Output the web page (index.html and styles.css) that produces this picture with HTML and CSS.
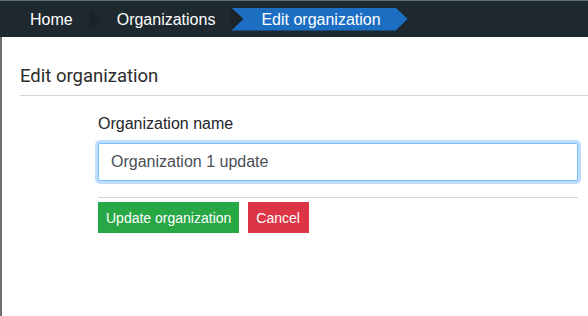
FILE: index.html
```html
<!DOCTYPE html>
<html lang="en">
<head>
    <meta charset="UTF-8">
    <meta name="viewport" content="width=device-width, initial-scale=1.0">
    <title>Edit organization</title>
    <link rel="stylesheet" href="styles.css">
</head>
<body>
    <nav class="topbar">
        <ol class="crumbs">
            <li class="crumb">Home</li>
            <li class="crumb">Organizations</li>
            <li class="crumb active">Edit organization</li>
        </ol>
    </nav>

    <main class="page">
        <h2 class="page-title">Edit organization</h2>

        <form class="edit-form">
            <label class="field-label" for="orgName">Organization name</label>
            <input type="text" id="orgName" class="field-input" value="Organization 1 update">
            <hr class="divider">
            <div class="actions">
                <button type="button" class="btn btn-success">Update organization</button>
                <button type="button" class="btn btn-danger">Cancel</button>
            </div>
        </form>
    </main>
</body>
</html>
```

FILE: styles.css
```css
html, body {
    margin: 0;
    height: 100%;
}
body {
    font-family: "Liberation Sans", Arial, sans-serif;
    background: #fff;
    display: flex;
    flex-direction: column;
}
.topbar {
    background: #1e292f;
    border-top: 1px solid #5b6f7b;
    height: 36px;
    display: flex;
    align-items: center;
}
.crumbs {
    list-style: none;
    margin: 0;
    padding: 0 0 0 14px;
    display: flex;
    align-items: center;
    height: 23px;
}
.crumb {
    color: #fff;
    font-size: 16px;
    height: 23px;
    line-height: 23px;
    padding: 0 16px;
    position: relative;
}
.crumb + .crumb {
    padding-left: 28px;
}
/* dark chevron after each crumb */
.crumb::after {
    content: "";
    position: absolute;
    right: -12px;
    top: 0;
    border-top: 11.5px solid transparent;
    border-bottom: 11.5px solid transparent;
    border-left: 12px solid #1a2328;
}
.crumb.active {
    background: #1b6ec2;
    padding-left: 30px;
    padding-right: 27px;
    clip-path: polygon(0 0, calc(100% - 12px) 0, 100% 50%, calc(100% - 12px) 100%, 0 100%, 12px 50%);
}
.crumb.active::after {
    display: none;
}
.page {
    flex: 1;
    border-left: 2px solid #6f6f6f;
    padding: 28px 0 0 18px;
}
.page-title {
    font-family: Roboto, "Liberation Sans", sans-serif;
    font-weight: normal;
    font-size: 18.5px;
    line-height: 22px;
    color: #2b2b2b;
    margin: 0;
    padding-bottom: 8px;
    border-bottom: 1px solid #d4d4d4;
}
.edit-form {
    padding: 19px 10px 0 78px;
    display: flex;
    flex-direction: column;
}
.field-label {
    font-size: 16px;
    line-height: 18px;
    color: #212529;
    margin-bottom: 10px;
}
.field-input {
    font-family: "Liberation Sans", Arial, sans-serif;
    font-size: 16px;
    color: #495057;
    height: 38px;
    box-sizing: border-box;
    padding: 0 12px;
    border: 1px solid #80bdff;
    border-radius: 2px;
    box-shadow: 0 0 0 3px rgba(0, 123, 255, 0.25);
    outline: none;
}
.divider {
    border: 0;
    border-top: 1px solid #d6d6d6;
    margin: 16px 0 4px;
}
.actions {
    display: flex;
    gap: 9px;
}
.btn {
    font-family: "Liberation Sans", Arial, sans-serif;
    font-size: 14px;
    color: #fff;
    border: none;
    height: 31px;
    padding: 0 8px;
    border-radius: 0;
    cursor: pointer;
}
.btn-success {
    background: #28a745;
}
.btn-danger {
    background: #dc3545;
    padding-right: 9px;
}
```
